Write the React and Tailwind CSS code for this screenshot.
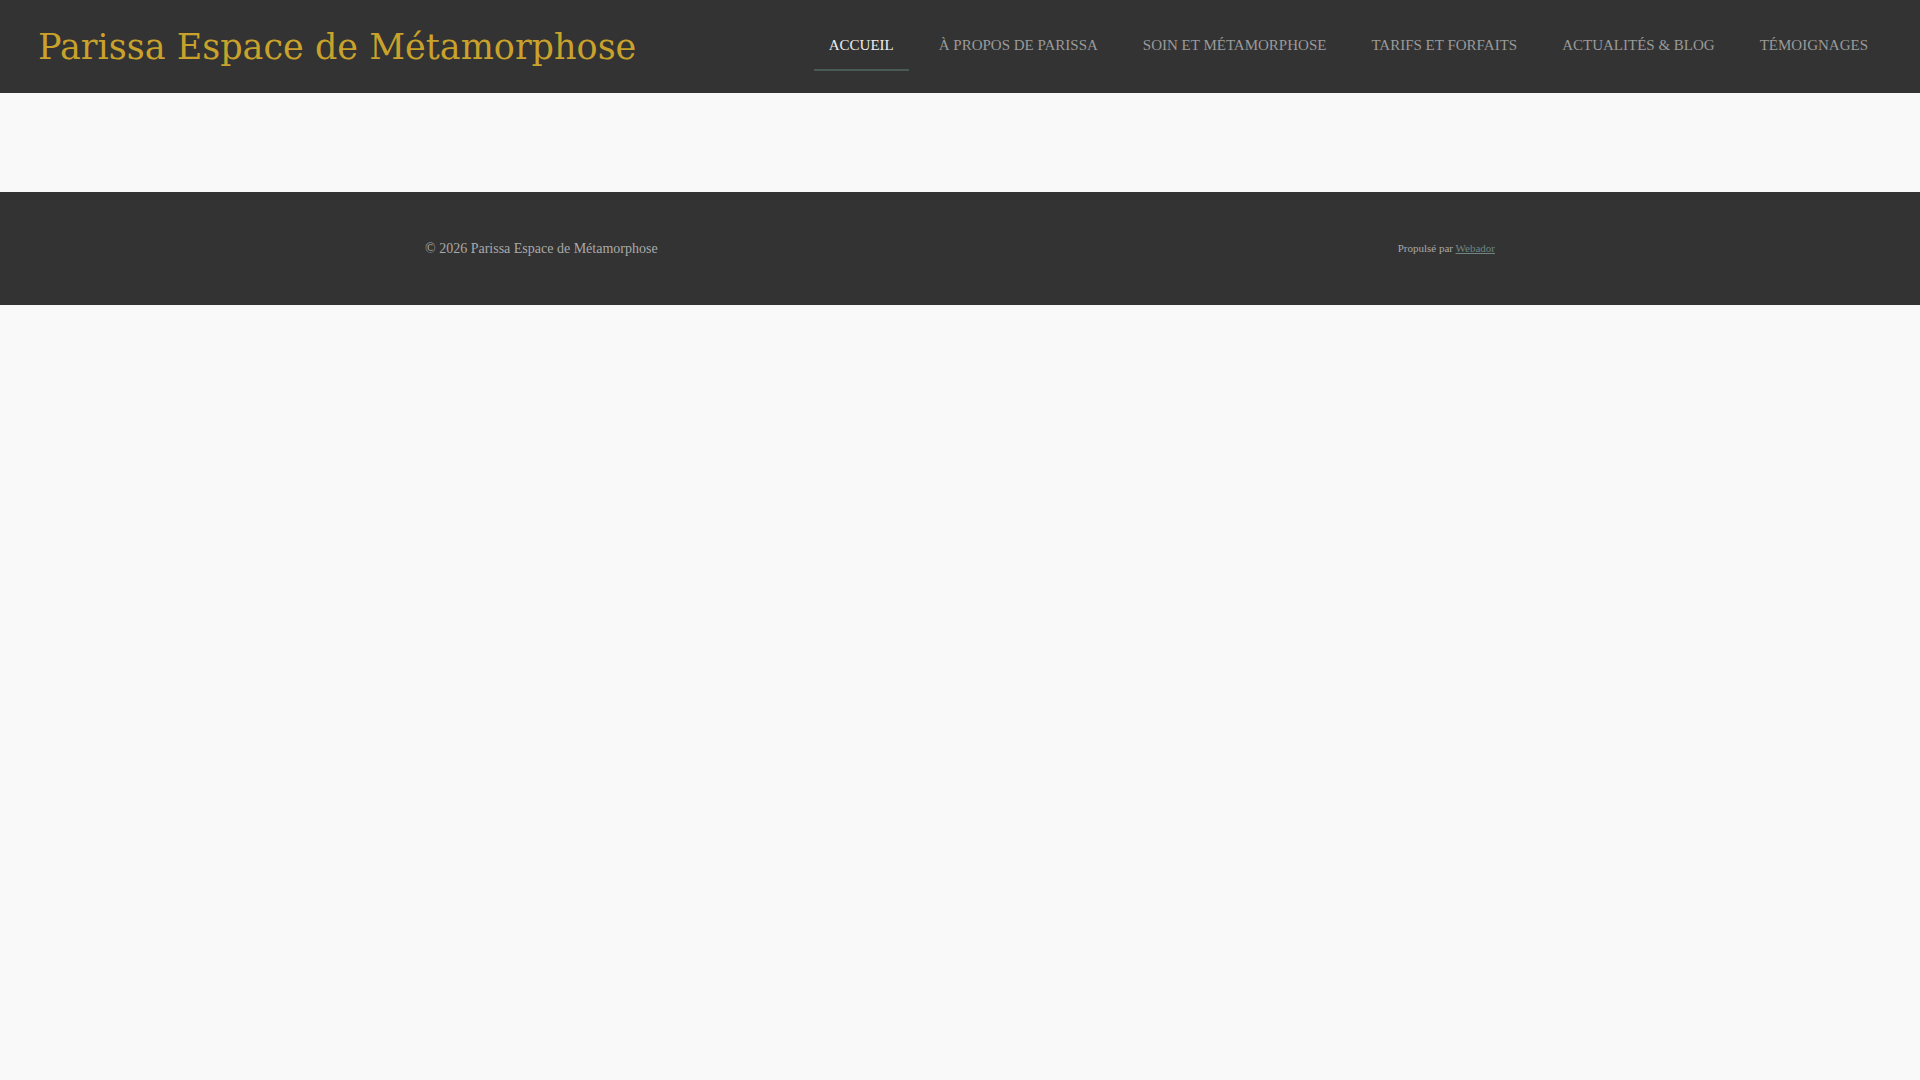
import React from 'react';

const NAV_ITEMS = [
  { label: 'Accueil', active: true },
  { label: 'À propos de Parissa' },
  { label: 'Soin et Métamorphose' },
  { label: 'Tarifs et forfaits' },
  { label: 'Actualités & Blog' },
  { label: 'Témoignages' },
];

const App = () => {
  return (
    <div className="min-h-screen bg-[#f9f9f9]">
      {/* Header */}
      <header className="h-[93px] bg-[#333333] flex items-center justify-between pl-[38px] pr-[37px]">
        <a
          href="#"
          className="text-[35px] leading-none text-[#c9a22b] font-['DejaVu_Serif',serif] pt-[1px]"
        >
          Parissa Espace de Métamorphose
        </a>
        <nav className="flex items-center gap-[15px] h-full">
          {NAV_ITEMS.map((item) => (
            <a
              key={item.label}
              href="#"
              className={`relative h-full flex items-center px-[15px] pb-[2px] uppercase text-[15px] font-['Liberation_Serif',serif] ${
                item.active ? 'text-[#eeeeee]' : 'text-[#9a9a9a]'
              }`}
            >
              {item.label}
              {item.active && (
                <span className="absolute left-0 right-0 top-[69px] h-[2px] bg-[#4a5a57]" />
              )}
            </a>
          ))}
        </nav>
      </header>

      {/* Empty content band */}
      <main className="h-[99px] bg-[#f9f9f9]" />

      {/* Footer */}
      <footer className="h-[113px] bg-[#333333]">
        <div className="max-w-[1100px] mx-auto px-[15px] h-full flex items-center justify-between font-['Liberation_Serif',serif]">
          <span className="text-[14px] text-[#a9a9a9]">© 2026 Parissa Espace de Métamorphose</span>
          <span className="text-[11px] text-[#a9a9a9]">
            Propulsé par{' '}
            <a href="#" className="underline text-[#6e8580]">Webador</a>
          </span>
        </div>
      </footer>
    </div>
  );
};

export default App;
